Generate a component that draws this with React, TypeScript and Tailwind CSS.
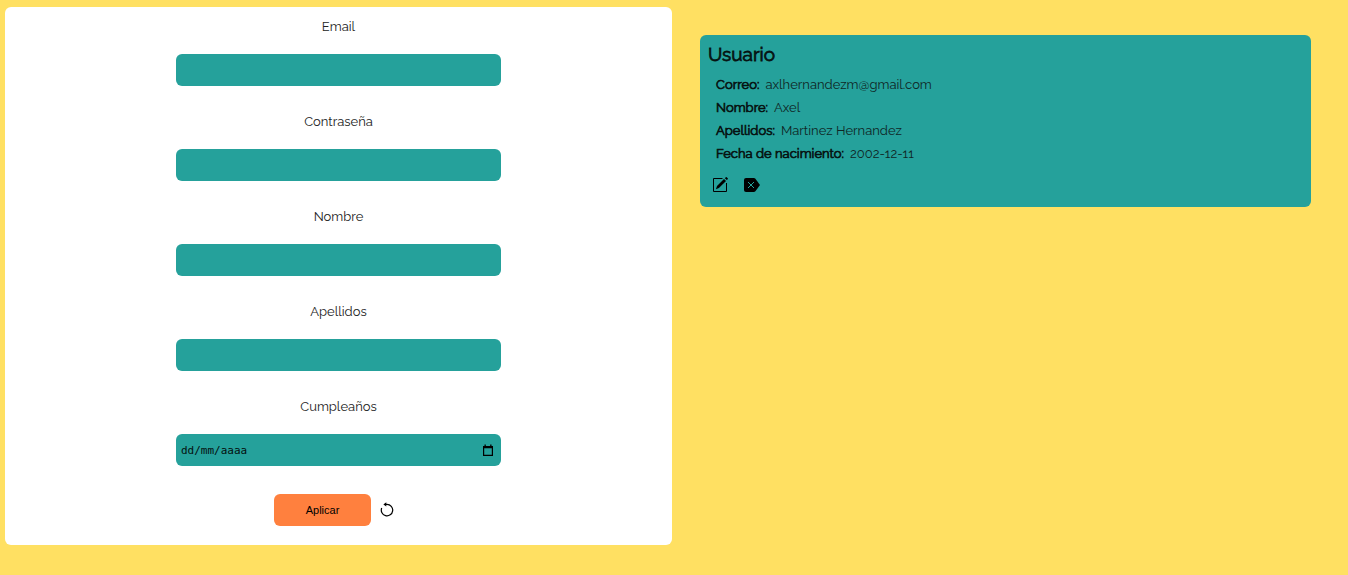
import { useState } from "react";

const fields = [
  { id: "email", label: "Email", type: "email" },
  { id: "password", label: "Contraseña", type: "password" },
  { id: "name", label: "Nombre", type: "text" },
  { id: "surname", label: "Apellidos", type: "text" },
];

const details = [
  { term: "Correo:", value: "axlhernandezm@gmail.com" },
  { term: "Nombre:", value: "Axel" },
  { term: "Apellidos:", value: "Martinez Hernandez" },
  { term: "Fecha de nacimiento:", value: "2002-12-11" },
];

function ResetIcon() {
  return (
    <svg width="16" height="16" viewBox="0 0 16 16" fill="none" aria-hidden="true">
      <path d="M5.500 2.400H8A5.700 5.700 0 1 1 2.700 6" stroke="currentColor" strokeWidth="1.200" />
      <path d="M7.300.2v4.400L4.400 2.400z" fill="currentColor" />
    </svg>
  );
}

function EditIcon() {
  return (
    <svg width="16" height="16" viewBox="0 0 16 16" fill="none" aria-hidden="true">
      <path d="M10.500 1.500h-9v13h13V6" stroke="currentColor" />
      <path d="M12 2 14 4 6.900 11.100 3.900 12.200 5 9.100z" fill="currentColor" />
      <path d="m12.900 1.200.9-.9a.6.6 0 0 1 .9 0l1 1a.6.6 0 0 1 0 .9l-.9.9z" fill="currentColor" />
    </svg>
  );
}

function RemoveIcon() {
  return (
    <svg width="16" height="16" viewBox="0 0 16 16" fill="none" aria-hidden="true">
      <path d="M2 1h7.800c.6 0 1.200.3 1.600.8L16 8l-4.600 6.200c-.4.5-1 .8-1.600.8H2a2 2 0 0 1-2-2V3a2 2 0 0 1 2-2z" fill="currentColor" />
      <path d="m4 5 6 6m0-6-6 6" stroke="#25a19b" />
    </svg>
  );
}

function CalendarIcon() {
  return (
    <svg width="12" height="13" viewBox="0 0 12 13" fill="none" aria-hidden="true">
      <path d="M1.600 2.500h8.800v8.900H1.600z" stroke="currentColor" strokeWidth="1.200" />
      <path d="M1 1.900h10v2.300H1zM2.500.5h1.300v1.500H2.500zM8.200.5h1.300v1.500H8.200z" fill="currentColor" />
    </svg>
  );
}

export default function App() {
  const [formKey, setFormKey] = useState(0);
  return (
    <main className="grid min-h-screen grid-cols-2 items-start bg-[#ffe062] font-[Raleway,Lato,sans-serif] text-[13px] leading-5 text-[#222]">
      <form
        key={formKey}
        onSubmit={(e) => e.preventDefault()}
        className="mt-[7px] mr-0.5 ml-[5px] flex flex-col items-center rounded-md bg-white px-4 pt-2.5 pb-[19px]"
      >
        <div className="flex w-[325px] max-w-full flex-col gap-[26px]">
          {fields.map((f) => (
            <div key={f.id} className="flex flex-col gap-[17px]">
              <label htmlFor={f.id} className="text-center">{f.label}</label>
              <input id={f.id} type={f.type} className="h-8 w-full rounded-md bg-[#25a19b] px-1 text-black" />
            </div>
          ))}
          <div className="flex flex-col gap-[17px]">
            <label htmlFor="birthday" className="text-center">Cumpleaños</label>
            <div className="flex h-8 items-center rounded-md bg-[#25a19b] pr-[7px] pl-[5px] text-black">
              <input
                id="birthday"
                type="text"
                placeholder="dd/mm/aaaa"
                className="h-8 min-w-0 flex-1 bg-transparent pt-px font-['DejaVu_Sans_Mono',monospace] text-[11px] outline-none placeholder:text-[#04100f]"
              />
              <button type="button" aria-label="Abrir calendario"><CalendarIcon /></button>
            </div>
          </div>
        </div>
        <div className="mt-7 flex items-center">
          <button type="submit" className="h-8 rounded-md bg-[#ff803e] px-8 font-['Liberation_Sans',Arial,sans-serif] text-[11px] text-black">
            Aplicar
          </button>
          <button
            type="button"
            aria-label="Restablecer"
            onClick={() => setFormKey((k) => k + 1)}
            className="flex size-8 items-center justify-center text-black"
          >
            <ResetIcon />
          </button>
        </div>
      </form>

      <section className="mt-[35px] mr-[37px] ml-[26px] rounded-md bg-[#25a19b] p-2">
        <h2 className="text-[19px] leading-[22px] font-normal text-[#061211] [-webkit-text-stroke:0.04em_currentColor]">Usuario</h2>
        <dl className="mt-2 flex flex-col px-2">
          {details.map((d) => (
            <div key={d.term} className="flex h-[23px] items-center gap-1.5">
              <dt className="text-[#061211] [-webkit-text-stroke:0.05em_currentColor]">{d.term}</dt>
              <dd className="text-[#0f2625]">{d.value}</dd>
            </div>
          ))}
        </dl>
        <div className="mt-3 flex gap-4 px-1 pb-1.5 text-black">
          <button type="button" aria-label="Editar"><EditIcon /></button>
          <button type="button" aria-label="Eliminar"><RemoveIcon /></button>
        </div>
      </section>
    </main>
  );
}
